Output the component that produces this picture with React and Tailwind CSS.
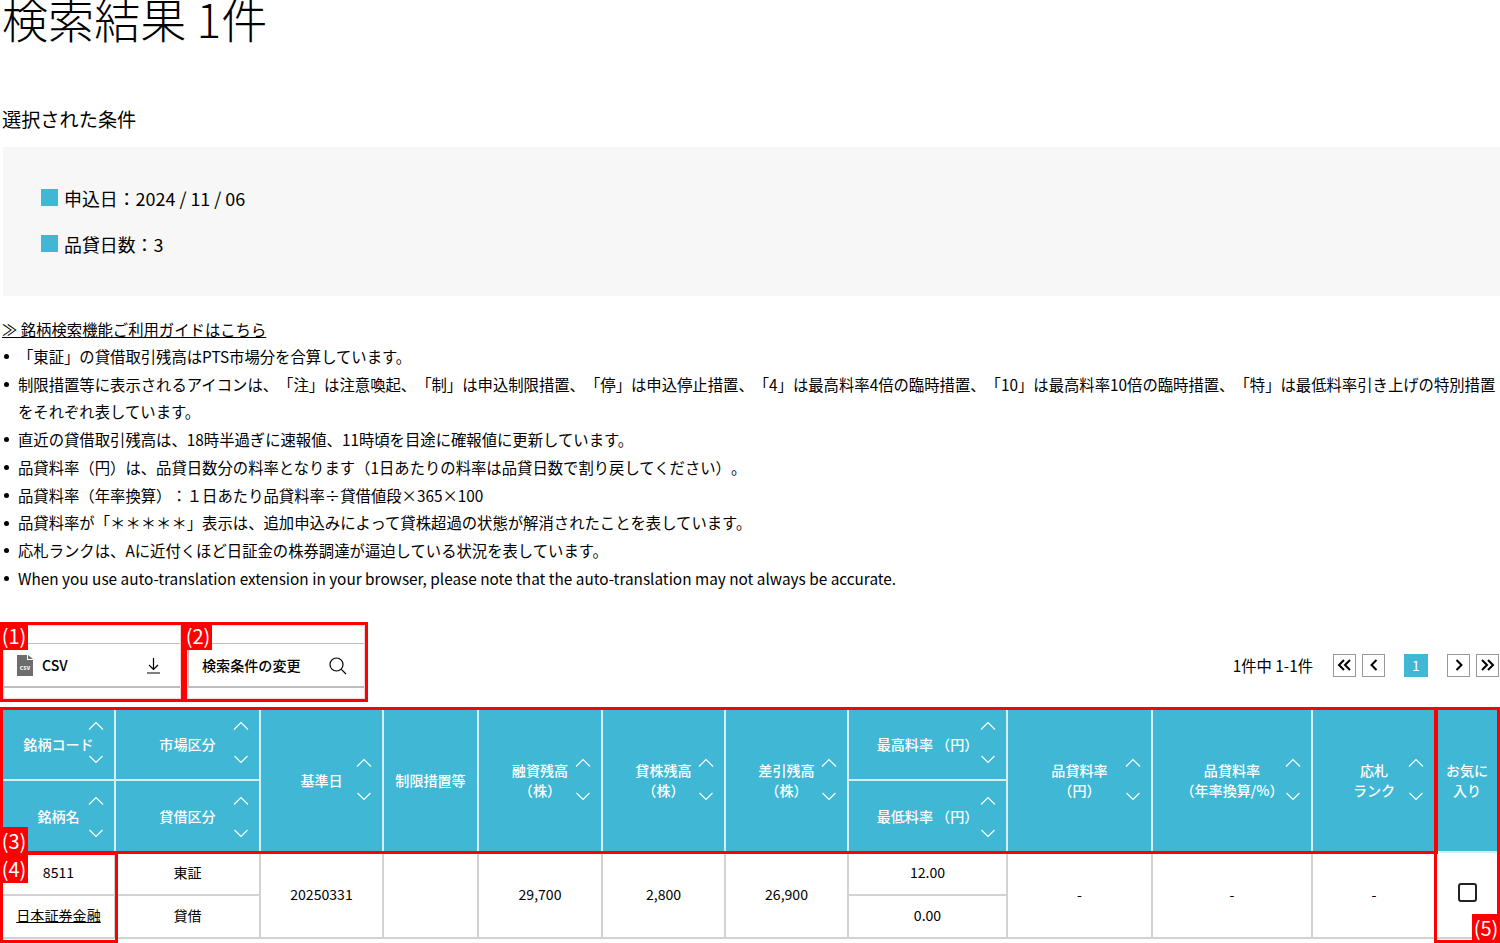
import React from "react";

const notes = [
  "「東証」の貸借取引残高はPTS市場分を合算しています。",
  "制限措置等に表示されるアイコンは、「注」は注意喚起、「制」は申込制限措置、「停」は申込停止措置、「4」は最高料率4倍の臨時措置、「10」は最高料率10倍の臨時措置、「特」は最低料率引き上げの特別措置をそれぞれ表しています。",
  "直近の貸借取引残高は、18時半過ぎに速報値、11時頃を目途に確報値に更新しています。",
  "品貸料率（円）は、品貸日数分の料率となります（1日あたりの料率は品貸日数で割り戻してください）。",
  "品貸料率（年率換算）：１日あたり品貸料率÷貸借値段×365×100",
  "品貸料率が「＊＊＊＊＊」表示は、追加申込みによって貸株超過の状態が解消されたことを表しています。",
  "応札ランクは、Aに近付くほど日証金の株券調達が逼迫している状況を表しています。",
  "When you use auto-translation extension in your browser, please note that the auto-translation may not always be accurate.",
];

const frames = [
  "left-0 top-[622px] w-[184px] h-[80px] shadow-[inset_0_0_0_1px_#f0d8d8]",
  "left-[184px] top-[622px] w-[184px] h-[80px] shadow-[inset_0_0_0_1px_#f0d8d8]",
  "left-0 top-[707px] w-[1438px] h-[147px]",
  "left-0 top-[852px] w-[118px] h-[91px]",
  "left-[1434px] top-[707px] w-[66px] h-[236px]",
];

const labels = [
  { text: "(1)", cls: "left-0 top-[622px]" },
  { text: "(2)", cls: "left-[184px] top-[622px]" },
  { text: "(3)", cls: "left-0 top-[827px]" },
  { text: "(4)", cls: "left-0 top-[855px]" },
  { text: "(5)", cls: "left-[1472px] top-[914px]" },
];

function Sort({ pos }) {
  return (
    <div className={`absolute flex flex-col justify-between ${pos}`}>
      <svg width="16" height="9" viewBox="0 0 16 9" fill="none" stroke="white" strokeWidth="1.1">
        <path d="M1 8.5 8 1.5l7 7" />
      </svg>
      <svg width="16" height="9" viewBox="0 0 16 9" fill="none" stroke="white" strokeWidth="1.1">
        <path d="M1.5 1 8 7.5 14.5 1" />
      </svg>
    </div>
  );
}

function Head({ children, rowSpan, sort, h, inner }) {
  return (
    <th rowSpan={rowSpan} className={`${h} p-0 bg-[#40b7d4] border-r-2 border-b-2 border-[#d5eef4] text-white text-[14.08px] leading-[20px] font-medium text-center align-middle`}>
      <div className={`relative ${inner} flex items-center justify-center`}>
        <div>{children}</div>
        {sort && <Sort pos={sort} />}
      </div>
    </th>
  );
}

function Cell({ children, rowSpan, cls = "" }) {
  return (
    <td rowSpan={rowSpan} className={`p-0 border-r-2 border-b-2 border-[#d2d2d2] text-center align-middle text-[14.08px] text-black ${cls}`}>
      {children}
    </td>
  );
}

function PageBtn({ children, active }) {
  return (
    <div className={`h-[23px] flex items-center justify-center border ${active ? "w-[24px] border-[#40b7d4] bg-[#40b7d4] text-white text-[14px]" : "w-[23px] border-[#999] bg-white"}`}>
      {children}
    </div>
  );
}

const row1 = "right-[10px] top-[12px] h-[43px]";
const row2 = "right-[10px] top-[15px] h-[42px]";
const tall = "right-[10px] top-[49px] h-[43px]";
const tallNarrow = "right-[11px] top-[49px] h-[43px]";

export default function App() {
  return (
    <div className="relative h-[943px] overflow-hidden bg-white text-black [text-spacing-trim:space-all] font-['Noto_Sans_CJK_JP','Noto_Sans',sans-serif]">
      <div className="pl-[2px]">
        <h1 className="-mt-[12px] h-[60px] text-[46.08px] leading-[60px] font-light">検索結果 1件</h1>
        <h2 className="mt-[58px] h-[27px] text-[19.2px] leading-[27px] font-normal">選択された条件</h2>

        <div className="mt-[14px] h-[149px] ml-[1px] bg-[#f7f7f7] pl-[38px] pt-[38px]">
          <div className="flex items-center gap-[6px] h-[26px] text-[17.92px] leading-[26px]">
            <span className="w-[17px] h-[17px] bg-[#40b7d4] -mt-[1px]"></span>
            <span>申込日：2024 / 11 / 06</span>
          </div>
          <div className="flex items-center gap-[6px] h-[26px] mt-[20px] text-[17.92px] leading-[26px]">
            <span className="w-[17px] h-[17px] bg-[#40b7d4] -mt-[1px]"></span>
            <span>品貸日数：3</span>
          </div>
        </div>

        <div className="mt-[20px] text-[15.35px] leading-[27.75px]">
          <a className="underline block h-[27.75px]">≫ 銘柄検索機能ご利用ガイドはこちら</a>
          <ul className="-mt-[1px]">
            {notes.map((n) => (
              <li key={n} className="flex">
                <span className="w-[16px] shrink-0 h-[27.75px] flex items-center pl-[2px]">
                  <span className="w-[5px] h-[5px] rounded-full bg-black"></span>
                </span>
                <span>{n}</span>
              </li>
            ))}
          </ul>
        </div>

        <div className="mt-[36px] h-[81px] flex items-start">
          <div className="mt-[14px] w-[178px] h-[45px] ml-[1px] pt-[3px] border-t border-b-2 border-[#bdbdbd] flex items-center justify-between pl-[14px] pr-[20px]">
            <div className="flex items-center gap-[9px]">
              <svg width="16" height="21" viewBox="0 0 16 21">
                <path d="M0 0h10v5h6v16H0z" fill="#6d6d6d" />
                <path d="M11 0l5 4h-5z" fill="#6d6d6d" />
                <text x="8" y="14.5" fill="white" fontSize="6.5" fontWeight="700" textAnchor="middle">csv</text>
              </svg>
              <span className="text-[14.08px] font-medium">CSV</span>
            </div>
            <svg width="15" height="16" viewBox="0 0 15 16" fill="none" stroke="black" strokeWidth="1.2">
              <path d="M7.5 0v11M3 7l4.5 4.5L12 7M1 15h13" />
            </svg>
          </div>
          <div className="mt-[14px] ml-[7px] w-[177px] h-[45px] pt-[3px] border-t border-b-2 border-l border-[#bdbdbd] flex items-center justify-between pl-[13px] pr-[18px]">
            <span className="text-[14.08px] font-medium">検索条件の変更</span>
            <svg width="18" height="18" viewBox="0 0 18 18" fill="none" stroke="black" strokeWidth="1.2">
              <circle cx="7.5" cy="7.5" r="6.5" />
              <path d="M12.3 12.3 17 17" />
            </svg>
          </div>

          <div className="ml-auto mt-[25px] mr-[1px] flex items-center">
            <span className="text-[15.35px] mr-[20px]">1件中 1-1件</span>
            <div className="flex items-center gap-[6px]">
              <PageBtn>
                <svg width="15" height="12" viewBox="0 0 15 12" fill="none" stroke="black" strokeWidth="2">
                  <path d="M7 1 2 6l5 5M13 1 8 6l5 5" />
                </svg>
              </PageBtn>
              <PageBtn>
                <svg width="8" height="12" viewBox="0 0 8 12" fill="none" stroke="black" strokeWidth="2">
                  <path d="M6.5 1 1.5 6l5 5" />
                </svg>
              </PageBtn>
              <div className="w-[7px]"></div>
              <PageBtn active>1</PageBtn>
              <div className="w-[7px]"></div>
              <PageBtn>
                <svg width="8" height="12" viewBox="0 0 8 12" fill="none" stroke="black" strokeWidth="2">
                  <path d="m1.5 1 5 5-5 5" />
                </svg>
              </PageBtn>
              <PageBtn>
                <svg width="15" height="12" viewBox="0 0 15 12" fill="none" stroke="black" strokeWidth="2">
                  <path d="m2 1 5 5-5 5M8 1l5 5-5 5" />
                </svg>
              </PageBtn>
            </div>
          </div>
        </div>

        <table className="mt-[-1px] ml-[1px] w-[1496px] table-fixed border-separate border-spacing-0">
          <colgroup>
            <col className="w-[113px]" />
            <col className="w-[145px]" />
            <col className="w-[123px]" />
            <col className="w-[95px]" />
            <col className="w-[124px]" />
            <col className="w-[123px]" />
            <col className="w-[123px]" />
            <col className="w-[159px]" />
            <col className="w-[145px]" />
            <col className="w-[160px]" />
            <col className="w-[124px]" />
            <col className="w-[62px]" />
          </colgroup>
          <thead>
            <tr>
              <Head h="h-[72px]" inner="h-[70px]" sort={row1}>銘柄コード</Head>
              <Head h="h-[72px]" inner="h-[70px]" sort={row1}>市場区分</Head>
              <Head rowSpan={2} sort={tall} h="h-[144px]" inner="h-[142px]">基準日</Head>
              <Head rowSpan={2} h="h-[144px]" inner="h-[142px]">制限措置等</Head>
              <Head rowSpan={2} sort={tall} h="h-[144px]" inner="h-[142px]">融資残高<br />（株）</Head>
              <Head rowSpan={2} sort={tall} h="h-[144px]" inner="h-[142px]">貸株残高<br />（株）</Head>
              <Head rowSpan={2} sort={tall} h="h-[144px]" inner="h-[142px]">差引残高<br />（株）</Head>
              <Head h="h-[72px]" inner="h-[70px]" sort={row1}>最高料率 （円）</Head>
              <Head rowSpan={2} sort={tall} h="h-[144px]" inner="h-[142px]">品貸料率<br />（円）</Head>
              <Head rowSpan={2} sort={tall} h="h-[144px]" inner="h-[142px]">品貸料率<br />（年率換算/%）</Head>
              <Head rowSpan={2} sort={tallNarrow} h="h-[144px]" inner="h-[142px]">応札<br />ランク</Head>
              <Head rowSpan={2} h="h-[144px]" inner="h-[142px]">お気に<br />入り</Head>
            </tr>
            <tr>
              <Head h="h-[72px]" inner="h-[70px]" sort={row2}>銘柄名</Head>
              <Head h="h-[72px]" inner="h-[70px]" sort={row2}>貸借区分</Head>
              <Head h="h-[72px]" inner="h-[70px]" sort={row2}>最低料率 （円）</Head>
            </tr>
          </thead>
          <tbody>
            <tr className="h-[43px]">
              <Cell>8511</Cell>
              <Cell>東証</Cell>
              <Cell rowSpan={2}>20250331</Cell>
              <Cell rowSpan={2}></Cell>
              <Cell rowSpan={2}>29,700</Cell>
              <Cell rowSpan={2}>2,800</Cell>
              <Cell rowSpan={2}>26,900</Cell>
              <Cell>12.00</Cell>
              <Cell rowSpan={2}>-</Cell>
              <Cell rowSpan={2}>-</Cell>
              <Cell rowSpan={2}>-</Cell>
              <Cell rowSpan={2} cls="border-r-0">
                <div className="w-[19px] h-[19px] mx-auto mb-[5px] rounded-[3px] border-2 border-[#222]"></div>
              </Cell>
            </tr>
            <tr className="h-[43px]">
              <Cell><a className="underline">日本証券金融</a></Cell>
              <Cell>貸借</Cell>
              <Cell>0.00</Cell>
            </tr>
          </tbody>
        </table>
      </div>

      {/* annotation frames over the screenshot */}
      {frames.map((f) => (
        <div key={f} className={`absolute border-[3px] border-[#ff0000] ${f}`}></div>
      ))}
      {labels.map((l) => (
        <div key={l.text} className={`absolute w-[28px] h-[28px] bg-[#ff0000] text-white text-[20px] leading-[27px] text-center ${l.cls}`}>
          {l.text}
        </div>
      ))}
    </div>
  );
}
